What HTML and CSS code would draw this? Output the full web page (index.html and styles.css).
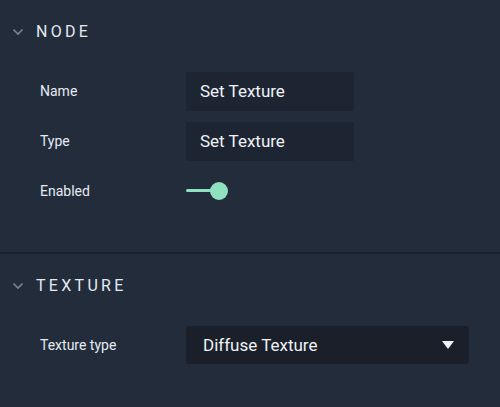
FILE: index.html
```html
<!DOCTYPE html>
<html>
<head>
<meta charset="utf-8">
<link rel="stylesheet" href="styles.css">
</head>
<body>
<div class="panel">
  <section class="section">
    <div class="header">
      <svg class="chev" width="12" height="8" viewBox="0 0 12 8"><path d="M1.5 1.5 L6 6 L10.5 1.5" fill="none" stroke="#7b8493" stroke-width="1.6"/></svg>
      <span class="title">NODE</span>
    </div>
    <div class="rows">
      <div class="row">
        <span class="label">Name</span>
        <div class="input">Set Texture</div>
      </div>
      <div class="row">
        <span class="label">Type</span>
        <div class="input">Set Texture</div>
      </div>
      <div class="row">
        <span class="label">Enabled</span>
        <div class="toggle"><span class="track"></span><span class="knob"></span></div>
      </div>
    </div>
  </section>
  <div class="divider"></div>
  <section class="section">
    <div class="header">
      <svg class="chev" width="12" height="8" viewBox="0 0 12 8"><path d="M1.5 1.5 L6 6 L10.5 1.5" fill="none" stroke="#7b8493" stroke-width="1.6"/></svg>
      <span class="title">TEXTURE</span>
    </div>
    <div class="rows">
      <div class="row">
        <span class="label">Texture type</span>
        <div class="select"><span>Diffuse Texture</span><svg width="12" height="8" viewBox="0 0 12 8"><path d="M0 0 H12 L6 8 Z" fill="#f2f4f7"/></svg></div>
      </div>
    </div>
  </section>
</div>
</body>
</html>
```
FILE: styles.css
```css
html, body {
  margin: 0;
  padding: 0;
  background: #232c3b;
  font-family: Roboto, "Liberation Sans", sans-serif;
  color: #e8edf4;
}
.panel {
  width: 500px;
  height: 407px;
  display: flex;
  flex-direction: column;
}
.section {
  display: flex;
  flex-direction: column;
}
.section:first-child {
  height: 252px;
}
.header {
  height: 62px;
  display: flex;
  align-items: center;
  padding-left: 12px;
}
.chev {
  margin-right: 12px;
  margin-top: 2px;
}
.title {
  font-size: 16px;
  letter-spacing: 3.3px;
  color: #e3e9f1;
  font-weight: 400;
}
.rows {
  padding-top: 4px;
  display: flex;
  flex-direction: column;
}
.row {
  height: 50px;
  display: flex;
  align-items: center;
  padding-left: 40px;
}
.label {
  width: 146px;
  font-size: 14px;
  color: #e6ebf2;
}
.input {
  width: 168px;
  height: 39px;
  padding-left: 14px;
  box-sizing: border-box;
  background: #1e2532;
  display: flex;
  align-items: center;
  font-size: 17px;
  color: #eef2f7;
  border-radius: 1px;
}
.toggle {
  position: relative;
  width: 44px;
  height: 20px;
}
.track {
  position: absolute;
  left: 0;
  top: 8px;
  width: 28px;
  height: 3px;
  background: #8fe1c0;
  border-radius: 2px;
}
.knob {
  position: absolute;
  left: 24px;
  top: 1px;
  width: 18px;
  height: 18px;
  border-radius: 50%;
  background: #8fe1c0;
}
.divider {
  height: 2px;
  background: #1b2130;
}
.select {
  width: 283px;
  height: 38px;
  box-sizing: border-box;
  background: #1a1f29;
  border-radius: 3px;
  display: flex;
  align-items: center;
  justify-content: space-between;
  padding-left: 17px;
  padding-right: 15px;
  font-size: 17px;
  color: #eef2f7;
}
```
